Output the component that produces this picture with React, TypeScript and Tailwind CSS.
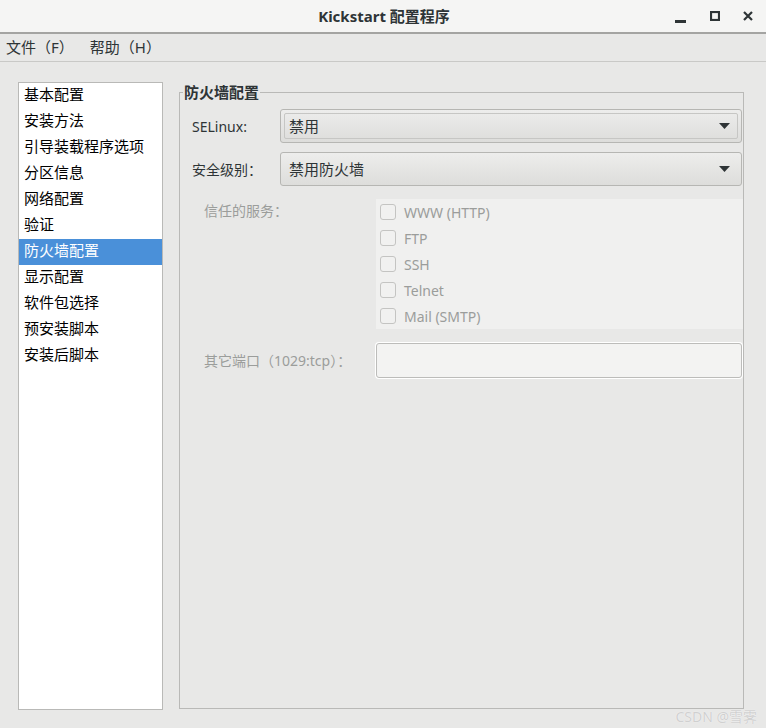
import React from "react";

const FONT = '"Noto Sans", "Noto Sans CJK SC", sans-serif';

function Arrow() {
  return (
    <svg width="11" height="6" viewBox="0 0 11 6" className="shrink-0">
      <path d="M0 0 H11 L5.5 6 Z" fill="#2e3436" />
    </svg>
  );
}

function Combo({ value, focused }: { value: string; focused?: boolean }) {
  return (
    <div className="flex-1 h-[34px] rounded-[3px] border border-[#b6b6b3] bg-gradient-to-b from-[#ededec] to-[#dddddb] p-[3px]">
      <div
        className={
          "h-full flex items-center pl-[4px] pr-[7px] rounded-[2px] border " +
          (focused ? "border-[#c6c6c4]" : "border-transparent")
        }
      >
        <span className="flex-1 text-[15px] text-[#2e3436] leading-none">{value}</span>
        <Arrow />
      </div>
    </div>
  );
}

function Check({ label }: { label: string }) {
  return (
    <div className="h-[26px] flex items-center pl-[4px]">
      <div className="w-[16px] h-[16px] rounded-[3px] border border-[#c4c4c2] bg-[#f1f1f0]" />
      <span className="ml-[8px] text-[14px] text-[#9b9d9b]">{label}</span>
    </div>
  );
}

const items = [
  "基本配置",
  "安装方法",
  "引导装载程序选项",
  "分区信息",
  "网络配置",
  "验证",
  "防火墙配置",
  "显示配置",
  "软件包选择",
  "预安装脚本",
  "安装后脚本",
];

export default function App() {
  return (
    <div
      className="relative w-[766px] h-[728px] bg-[#e8e8e7] flex flex-col overflow-hidden text-[#2e3436]"
      style={{ fontFamily: FONT }}
    >
      {/* Title bar */}
      <div className="h-[34px] shrink-0 bg-[#f5f5f4] border-b-2 border-[#a4a4a2] flex items-center relative">
        <div className="flex-1 text-center text-[15px] font-bold text-[#2e3436] pl-[2px]">
          Kickstart 配置程序
        </div>
        <div className="absolute right-0 top-0 h-[32px] flex items-center">
          <div className="w-[34px] flex justify-center">
            <svg width="12" height="14" viewBox="0 0 12 14">
              <rect x="0" y="11" width="11" height="3" fill="#2e3436" />
            </svg>
          </div>
          <div className="w-[34px] flex justify-center">
            <svg width="10" height="10" viewBox="0 0 10 10">
              <rect x="1" y="1" width="8" height="8" fill="none" stroke="#2e3436" strokeWidth="2.2" />
            </svg>
          </div>
          <div className="w-[34px] flex justify-center pr-[2px]">
            <svg width="10" height="10" viewBox="0 0 10 10">
              <path d="M1 1 L9 9 M9 1 L1 9" stroke="#2e3436" strokeWidth="2.2" />
            </svg>
          </div>
        </div>
      </div>

      {/* Menu bar */}
      <div className="h-[28px] shrink-0 border-b border-[#c9c9c7] flex items-center text-[15px] text-[#2e3436]">
        <span className="ml-[6px]">文件（F）</span>
        <span className="ml-[16px]">帮助（H）</span>
      </div>

      {/* Content */}
      <div className="flex-1 flex pl-[18px] pr-[22px] pt-[20px] pb-[18px] gap-[16px]">
        <div className="w-[145px] shrink-0 bg-white border border-[#b9b9b7]">
          {items.map((it) => (
            <div
              key={it}
              className={
                "h-[26px] flex items-center pl-[5px] pb-[3px] text-[15px] " +
                (it === "防火墙配置" ? "bg-[#4a90d9] text-white" : "text-black")
              }
            >
              {it}
            </div>
          ))}
        </div>

        <fieldset className="flex-1 border border-[#b9b9b7] mb-[1px] min-w-0">
          <legend className="ml-[3px] px-[1px] text-[15px] font-bold text-[#2e3436] leading-[20px]">
            防火墙配置
          </legend>
          <div className="flex flex-col pt-[7px] pr-[1px]">
            <div className="flex items-center pl-[12px]">
              <div className="w-[88px] text-[14px] text-[#2e3436]">SELinux:</div>
              <Combo value="禁用" focused />
            </div>
            <div className="flex items-center pl-[12px] mt-[9px]">
              <div className="w-[88px] text-[14px] text-[#2e3436]">安全级别：</div>
              <Combo value="禁用防火墙" />
            </div>
            <div className="flex pl-[24px] mt-[13px] mr-[-1px]">
              <div className="w-[172px] text-[14px] text-[#9b9d9b] pt-[1px]">信任的服务：</div>
              <div className="flex-1 bg-[#f0f0ef]">
                <Check label="WWW (HTTP)" />
                <Check label="FTP" />
                <Check label="SSH" />
                <Check label="Telnet" />
                <Check label="Mail (SMTP)" />
              </div>
            </div>
            <div className="flex items-center pl-[24px] mt-[14px]">
              <div className="w-[172px] text-[14px] text-[#9b9d9b]">其它端口（1029:tcp）：</div>
              <div className="flex-1 h-[35px] rounded-[3px] border border-[#bcbcba] bg-[#f3f3f2] shadow-[0_0_0_1px_#ffffff]" />
            </div>
          </div>
        </fieldset>
      </div>

      <div className="absolute right-[9px] bottom-[4px] text-[14px] text-[#d0d0d0] leading-none [text-shadow:0_0_1px_#ffffff]">
        CSDN @雪霁
      </div>
    </div>
  );
}
